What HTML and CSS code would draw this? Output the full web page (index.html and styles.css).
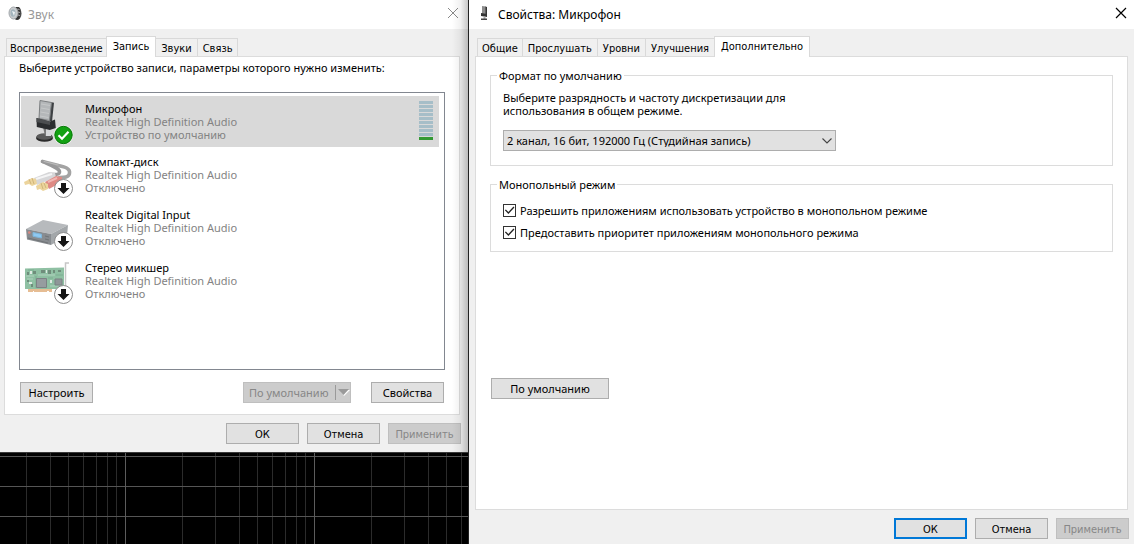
FILE: index.html
```html
<!DOCTYPE html>
<html lang="ru">
<head>
<meta charset="utf-8">
<title>Звук</title>
<link rel="stylesheet" href="styles.css">
</head>
<body>
<div class="desktop">
  <div class="left">
    <section class="window window-back" aria-label="Звук">
      <header class="titlebar">
        <svg class="app-icon" width="16" height="16" viewBox="0 0 16 16" aria-hidden="true">
          <ellipse cx="9" cy="7.500" rx="4.500" ry="6.500" fill="#4c4c4c"/>
          <path d="M8 1h3l1.500 2-1 10-3 1z" fill="#333"/>
          <ellipse cx="5.500" cy="7" rx="4.500" ry="6" fill="#c9ccce" stroke="#a3a8ac"/>
          <ellipse cx="5" cy="7" rx="2.500" ry="3.700" fill="#a3b4bd"/>
          <path d="M4 5l3 1-1 4z" fill="#eef3f5"/>
          <path d="M9.500 3l2 .5M10 6l2 .5M10 9l2 .5" stroke="#aaa"/>
        </svg>
        <h1 class="title">Звук</h1>
        <button class="close" aria-label="Закрыть"><svg width="12" height="12" viewBox="0 0 12 12"><path d="M1 1l10 10M11 1L1 11" stroke="currentColor" stroke-width="1" fill="none"/></svg></button>
      </header>
      <div class="body">
        <div class="tabs" role="tablist">
          <button class="tab" role="tab">Воспроизведение</button>
          <button class="tab active" role="tab" aria-selected="true">Запись</button>
          <button class="tab" role="tab">Звуки</button>
          <button class="tab" role="tab">Связь</button>
        </div>
        <div class="panel panel-record">
          <p class="hint">Выберите устройство записи, параметры которого нужно изменить:</p>
          <ul class="devices">
            <li class="device selected">
              <svg class="device-icon" width="50" height="51" viewBox="0 0 50 51" aria-hidden="true">
                <ellipse cx="20.500" cy="42" rx="8.500" ry="3.800" fill="#2b2b2b"/>
                <ellipse cx="20.500" cy="40.500" rx="8" ry="3.200" fill="#5a5a5a"/>
                <path d="M19 31h8v9h-5z" fill="#d5d7d9"/><path d="M19 31h3v9h-1z" fill="#777"/>
                <path d="M26.500 6l3.500.7-2 19-3-1z" fill="#3d4043"/>
                <path d="M16 4.500l11.500 2-2 18-10.500-2z" fill="#b4b7b9" stroke="#7c7f81"/>
                <path d="M17 8l9 1.500M17 12l8.500 1.500M16.500 16l8.500 1.500M16 20l8.500 1.500" stroke="#c6c8c9"/>
                <path d="M12.500 22l13.500 3.500 5-2 .8 8.500-6 2-13-3z" fill="#2b2d2f"/>
                <path d="M12.500 22l13.500 3.500v3.500l-13.500-3z" fill="#4c4e50"/>
                <circle cx="39.500" cy="39" r="9.800" fill="#f2f2f2"/><circle cx="39.500" cy="39" r="8.700" fill="#12a112" stroke="#087708"/>
                <path d="M34.500 39.300l3.500 3.400 6.500-7" fill="none" stroke="#fff" stroke-width="2.200"/>
              </svg>
              <div class="device-text"><strong>Микрофон</strong><span>Realtek High Definition Audio</span><span>Устройство по умолчанию</span></div>
              <div class="meter" role="img" aria-label="Уровень"><i></i><i></i><i></i><i></i><i></i><i></i><i></i><i></i><i></i><i class="on"></i></div>
            </li>
            <li class="device">
              <svg class="device-icon" width="50" height="51" viewBox="0 0 50 51" aria-hidden="true">
                <g fill="none" stroke-linecap="round">
                  <path d="M18.500 12.500l16 4c7 1.500 12 3 11 8-1 4-5 4-10 4" stroke="#a3a3a3" stroke-width="3.500"/>
                  <path d="M18.500 12.500c9 4 18 7 17 11-1 3-5 2-9 2" stroke="#989899" stroke-width="3.500"/>
                  <path d="M20 12.500l14 3.500" stroke="#bbb"/>
                </g>
                <path d="M10 29l15-6 6 1 1 4-19 8z" fill="#d6d6d8"/><path d="M12 30l16-5" stroke="#f4f4f5" stroke-width="2"/>
                <path d="M21 33l11-6 6 1v5l-13 7z" fill="#de8a84"/><path d="M24 33l9-4" stroke="#f0b7b3" stroke-width="2"/>
                <path d="M0 33l8-4 4 1 1 5-5 2-3-2-4 1z" fill="#ecd49c"/><path d="M5 30l2 5M8 29l2 6" stroke="#d0b57a"/>
                <path d="M12 37l7-4 5 2v5l-5 2-3-2-3 1z" fill="#ecd49c"/><path d="M17 34l2 6M20 34l2 5" stroke="#d0b57a"/>
                <circle cx="39.500" cy="39.500" r="9" fill="#fff" stroke="#8c8c8c"/>
                <path d="M37 34h5v5h3.500l-6 6-6-6H37z" fill="#151515"/>
              </svg>
              <div class="device-text"><strong>Компакт-диск</strong><span>Realtek High Definition Audio</span><span>Отключено</span></div>
            </li>
            <li class="device">
              <svg class="device-icon" width="50" height="51" viewBox="0 0 50 51" aria-hidden="true">
                <path d="M2 27l17-9 25 5-17 9z" fill="#b7babd"/>
                <path d="M2 27l25 5v11L3 37.500z" fill="#888c90"/>
                <path d="M27 32l17-9-1 11-16 9z" fill="#a3a7aa"/>
                <path d="M9 30.500l8.500 1.700v3.800L9 34.300z" fill="#8ec9f2" stroke="#7fb6da"/>
                <path d="M4 36l20 5M21 34l4 1M21 37l4 1" stroke="#6f7376"/>
                <circle cx="5.300" cy="30.500" r="1.300" fill="#dc8880"/>
                <circle cx="39.500" cy="39.500" r="9" fill="#fff" stroke="#8c8c8c"/>
                <path d="M37 34h5v5h3.500l-6 6-6-6H37z" fill="#151515"/>
              </svg>
              <div class="device-text"><strong>Realtek Digital Input</strong><span>Realtek High Definition Audio</span><span>Отключено</span></div>
            </li>
            <li class="device">
              <svg class="device-icon" width="50" height="51" viewBox="0 0 50 51" aria-hidden="true">
                <path d="M4 33h24v4h-3v-1h-2v1H10v-1H9v1H4z" fill="#e6bd94"/>
                <path d="M1 13.500l39-1V34H1z" fill="#8fc0a3"/>
                <path d="M2 21h8M14 20h18M26 31h12M3 24h6" stroke="#b0d3be"/>
                <path d="M4 15h6M12 21v12M24 23h5M31 20h8" stroke="#7bad90"/>
                <path d="M12.500 23.500h10v9h-10z" fill="#969c9f" stroke="#7c8284"/>
                <path d="M31 24h7v6h-7z" fill="#8f9698" stroke="#7b8183"/>
                <path d="M3 17h2v3H3zM9 16h3v3H9zM17 15h4v3h-4zM24 15h3v4h-3zM29 15h2v3h-2zM34 15h3v2h-3zM3 25h2v2H3zM7 29h2v3H7z" fill="#6f8d7b"/>
                <path d="M6 16h2v3H6zM22 15h1v3h-1zM5 27h3v2H5zM26 25h2v3h-2z" fill="#dfeae3"/>
                <path d="M41.500 33V8H45" fill="none" stroke="#c6c6c6" stroke-width="1.500"/>
                <circle cx="39.500" cy="39.500" r="9" fill="#fff" stroke="#8c8c8c"/>
                <path d="M37 34h5v5h3.500l-6 6-6-6H37z" fill="#151515"/>
              </svg>
              <div class="device-text"><strong>Стерео микшер</strong><span>Realtek High Definition Audio</span><span>Отключено</span></div>
            </li>
          </ul>
          <div class="device-actions">
            <button class="btn">Настроить</button>
            <button class="btn split" disabled><span class="split-label">По умолчанию</span><svg width="12" height="7" viewBox="0 0 12 7" aria-hidden="true"><path d="M2 1h10L6 7z" fill="#fff"/><path d="M0 0h11L5.500 6z" fill="#9a9a9a"/></svg></button>
            <button class="btn">Свойства</button>
          </div>
        </div>
        <footer class="footer">
          <button class="btn">ОК</button>
          <button class="btn">Отмена</button>
          <button class="btn" disabled>Применить</button>
        </footer>
      </div>
    </section>
    <svg class="graph" aria-hidden="true">
      <defs>
        <pattern id="decades" x="-64" y="0" width="189" height="30" patternUnits="userSpaceOnUse">
          <path d="M57.500 0v30M90.500 0v30M114.500 0v30M132.500 0v30M147.500 0v30M160.500 0v30M171.500 0v30M180.500 0v30" stroke="#2b2b2b"/>
          <path d="M0 4.500h189" stroke="#555"/>
          <path d="M.5 0v30" stroke="#5c5c5c"/>
        </pattern>
      </defs>
      <rect width="100%" height="100%" fill="#000"/>
      <rect width="100%" height="100%" fill="url(#decades)"/>
      <path d="M0 .5h2000" stroke="#3a3a3a"/>
    </svg>
  </div>

  <section class="window window-front" aria-label="Свойства: Микрофон">
    <header class="titlebar">
      <svg class="app-icon" width="16" height="16" viewBox="0 0 16 16" aria-hidden="true">
        <path d="M4 0l4 .5V9l-4-.5z" fill="#8d8d8d"/><path d="M7.500.500L9 1v8H7.500z" fill="#333"/>
        <path d="M3 7l6 1v3L3 10z" fill="#333"/><path d="M5.500 10.500h2V13h-2z" fill="#aaa"/>
        <path d="M3 12.500h6V14H3z" fill="#444"/>
      </svg>
      <h1 class="title">Свойства: Микрофон</h1>
      <button class="close" aria-label="Закрыть"><svg width="12" height="12" viewBox="0 0 12 12"><path d="M1 1l10 10M11 1L1 11" stroke="currentColor" stroke-width="1.200" fill="none"/></svg></button>
    </header>
    <div class="body">
      <div class="tabs" role="tablist">
        <button class="tab" role="tab">Общие</button>
        <button class="tab" role="tab">Прослушать</button>
        <button class="tab" role="tab">Уровни</button>
        <button class="tab" role="tab">Улучшения</button>
        <button class="tab active" role="tab" aria-selected="true">Дополнительно</button>
      </div>
      <div class="panel panel-advanced">
        <fieldset class="group format">
          <legend>Формат по умолчанию</legend>
          <label class="format-label" for="format">Выберите разрядность и частоту дискретизации для использования в общем режиме.</label>
          <div class="select">
            <select id="format"><option>2 канал, 16 бит, 192000 Гц (Студийная запись)</option></select>
            <svg class="chevron" width="10" height="6" viewBox="0 0 10 6" aria-hidden="true"><path d="M.5.500L5 5 9.500.500" fill="none" stroke="#444" stroke-width="1.100"/></svg>
          </div>
        </fieldset>
        <fieldset class="group exclusive">
          <legend>Монопольный режим</legend>
          <label class="check"><input type="checkbox" checked><span>Разрешить приложениям использовать устройство в монопольном режиме</span></label>
          <label class="check"><input type="checkbox" checked><span>Предоставить приоритет приложениям монопольного режима</span></label>
        </fieldset>
        <button class="btn reset">По умолчанию</button>
      </div>
      <footer class="footer">
        <button class="btn primary">ОК</button>
        <button class="btn">Отмена</button>
        <button class="btn" disabled>Применить</button>
      </footer>
    </div>
  </section>
</div>
</body>
</html>
```

FILE: styles.css
```css
* { box-sizing: border-box; }

body {
  margin: 0;
  background: #000;
  color: #000;
  font: 11px/13px "Noto Sans", "Open Sans", sans-serif;
}

button, select {
  margin: 0;
  border-radius: 0;
  color: inherit;
  font: inherit;
}

.desktop {
  display: grid;
  grid-template-columns: 469fr 665fr;
  min-height: 100vh;
}

.left {
  display: flex;
  flex-direction: column;
  min-width: 0;
  border-right: 1px solid #222;
}

.graph {
  display: block;
  flex: 1 1 0;
  width: 100%;
  min-height: 60px;
}

.window {
  display: flex;
  flex-direction: column;
  background: #f0f0f0;
}

.window-back { position: relative; }

.window-back::after {
  content: "";
  position: absolute;
  top: 0;
  right: 0;
  bottom: 0;
  width: 16px;
  background: linear-gradient(to right, rgba(0, 0, 0, 0), rgba(0, 0, 0, 0.06) 55%, rgba(0, 0, 0, 0.22));
  pointer-events: none;
}

.titlebar {
  display: flex;
  align-items: center;
  height: 29px;
  padding: 0 7px 0 9px;
  background: #fff;
}

.window-back .titlebar { padding: 0 9px 0 8px; }

.app-icon {
  flex: none;
  margin-bottom: 2px;
}

.title {
  flex: 1;
  margin: 0 0 0 4px;
  font-size: 12px;
  font-weight: 400;
  line-height: 16px;
}

.window-back .title { color: #999; }

.close {
  display: flex;
  margin-bottom: 3px;
  padding: 0;
  border: 0;
  background: none;
}

.window-back .close { color: #888; }

.body {
  display: flex;
  flex: 1;
  flex-direction: column;
  padding: 7px 6px 5px;
}

.window-back .body { padding: 7px 8px 8px 4px; }

.tabs {
  display: flex;
  align-items: flex-end;
  padding-left: 2px;
}

.tab {
  height: 18px;
  padding: 2px 5px 0;
  border: 1px solid #d9d9d9;
  border-bottom: 0;
  border-left-width: 0;
  background: #f0f0f0;
  font-family: "DejaVu Sans Condensed", "Noto Sans", sans-serif;
  white-space: nowrap;
}

.tab:first-child {
  padding: 2px 4px 0;
  border-left-width: 1px;
}

.window-back .tab:first-child { padding: 2px 3px 0; }

.tab.active {
  z-index: 1;
  height: 21px;
  margin: 0 0 -1px -1px;
  padding: 0 6px 2px;
  border-left-width: 1px;
  background: #fff;
}

.panel {
  display: flex;
  flex-direction: column;
  border: 1px solid #dcdcdc;
  background: #fff;
}

.panel-record { padding: 4px 14px 11px; }

.hint { margin: 0; }

.devices {
  display: flex;
  flex-direction: column;
  gap: 2px;
  min-height: 278px;
  margin: 18px 0 12px;
  padding: 3px 5px 3px 1px;
  border: 1px solid #828790;
  list-style: none;
}

.device {
  display: flex;
  height: 51px;
  padding-left: 3px;
}

.device.selected { background: #d9d9d9; }

.device-icon { flex: none; }

.device-text {
  display: flex;
  flex: 1;
  flex-direction: column;
  padding: 6px 0 0 11px;
  color: #838383;
}

.device-text strong {
  color: #000;
  font-weight: 400;
}

.meter {
  display: flex;
  flex-direction: column;
  gap: 1px;
  width: 14px;
  margin: 5px 6px 0 0;
}

.meter i {
  height: 3px;
  background: #a6bec8;
}

.meter .on { background: #339933; }

.device-actions {
  display: flex;
  gap: 20px;
  padding: 0 1px;
}

.btn {
  width: 73px;
  height: 21px;
  padding: 0;
  border: 1px solid #adadad;
  background: #e1e1e1;
  white-space: nowrap;
}

.btn:disabled {
  border-color: #bfbfbf;
  background: #cccccc;
  color: #878787;
}

.btn.primary { border: 2px solid #0078d7; }

.split {
  display: flex;
  align-items: center;
  gap: 2px;
  width: 108px;
  margin-left: auto;
  padding: 0 0 0 5px;
}

.split-label {
  flex: 1;
  height: 15px;
  border-right: 1px solid #9a9a9a;
  line-height: 15px;
  text-align: left;
}

.footer {
  display: flex;
  justify-content: flex-end;
  gap: 8px;
  margin-right: -1px;
  padding-top: 8px;
}

.footer .btn {
  padding-top: 2px;
  font-family: "DejaVu Sans Condensed", "Noto Sans", sans-serif;
}

.panel-advanced {
  flex: 1;
  padding: 12px 14px;
}

.group {
  min-width: 0;
  margin: 0;
  border: 1px solid #dcdcdc;
}

.group legend {
  margin-left: -6px;
  padding: 0 2px;
}

.format {
  display: flex;
  flex-direction: column;
  align-items: flex-start;
  padding: 9px 12px 14px;
}

.format-label { max-width: 300px; }

.select {
  position: relative;
  width: 333px;
  max-width: 100%;
  margin-top: 13px;
}

.select select {
  width: 100%;
  height: 21px;
  padding: 0 20px 0 3px;
  border: 1px solid #adadad;
  background: #e1e1e1;
  appearance: none;
}

.chevron {
  position: absolute;
  top: 8px;
  right: 4px;
  pointer-events: none;
}

.exclusive {
  display: flex;
  flex-direction: column;
  gap: 9px;
  margin-top: 12px;
  padding: 13px 12px 12px;
}

.check {
  display: flex;
  gap: 4px;
}

.check input {
  flex: none;
  display: grid;
  width: 13px;
  height: 13px;
  margin: 0;
  border: 1px solid #333;
  background: #fff;
  appearance: none;
}

.check input:checked::before {
  content: "";
  background: #222;
  clip-path: polygon(8% 48%, 17% 40%, 40% 63%, 86% 14%, 95% 22%, 40% 82%);
}

.reset {
  width: 118px;
  margin: 126px 0 0 1px;
}
```
